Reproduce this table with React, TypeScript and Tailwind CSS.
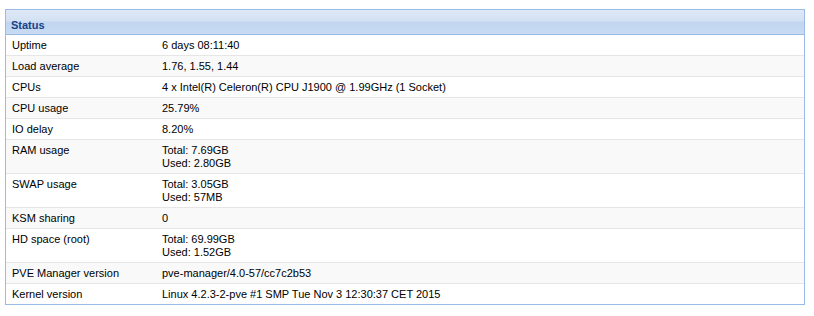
const rows: { label: string; value: string[] }[] = [
  { label: 'Uptime', value: ['6 days 08:11:40'] },
  { label: 'Load average', value: ['1.76, 1.55, 1.44'] },
  { label: 'CPUs', value: ['4 x Intel(R) Celeron(R) CPU J1900 @ 1.99GHz (1 Socket)'] },
  { label: 'CPU usage', value: ['25.79%'] },
  { label: 'IO delay', value: ['8.20%'] },
  { label: 'RAM usage', value: ['Total: 7.69GB', 'Used: 2.80GB'] },
  { label: 'SWAP usage', value: ['Total: 3.05GB', 'Used: 57MB'] },
  { label: 'KSM sharing', value: ['0'] },
  { label: 'HD space (root)', value: ['Total: 69.99GB', 'Used: 1.52GB'] },
  { label: 'PVE Manager version', value: ['pve-manager/4.0-57/cc7c2b53'] },
  { label: 'Kernel version', value: ['Linux 4.2.3-2-pve #1 SMP Tue Nov 3 12:30:37 CET 2015'] },
];

export default function App() {
  return (
    <div className="w-[814px] h-[316px] bg-white pt-[9px] pl-[5px] font-['Liberation_Sans',Arial,sans-serif] text-[11px] leading-[13px] text-black">
      <div className="w-[800px] border border-[#99bbe8]">
        <div className="h-[25px] border-b border-[#99bbe8] bg-[linear-gradient(to_bottom,#dfe9f6_0px,#d3e1f4_11px,#c1d5f0_12px,#c9dbf3_24px)] pl-[5px] pt-[9px]">
          <span className="font-bold text-[#15428b]">Status</span>
        </div>
        {rows.map((r, i) => (
          <div
            key={r.label}
            className={`flex border-b border-[#e6e6e6] last:border-b-0 pt-[4px] pb-[3px] ${i % 2 === 1 ? 'bg-[#f9f9f9]' : 'bg-white'}`}
          >
            <div className="w-[150px] pl-[6px] shrink-0">{r.label}</div>
            <div className="pl-[6px]">
              {r.value.map((v) => (
                <div key={v}>{v}</div>
              ))}
            </div>
          </div>
        ))}
      </div>
    </div>
  );
}
